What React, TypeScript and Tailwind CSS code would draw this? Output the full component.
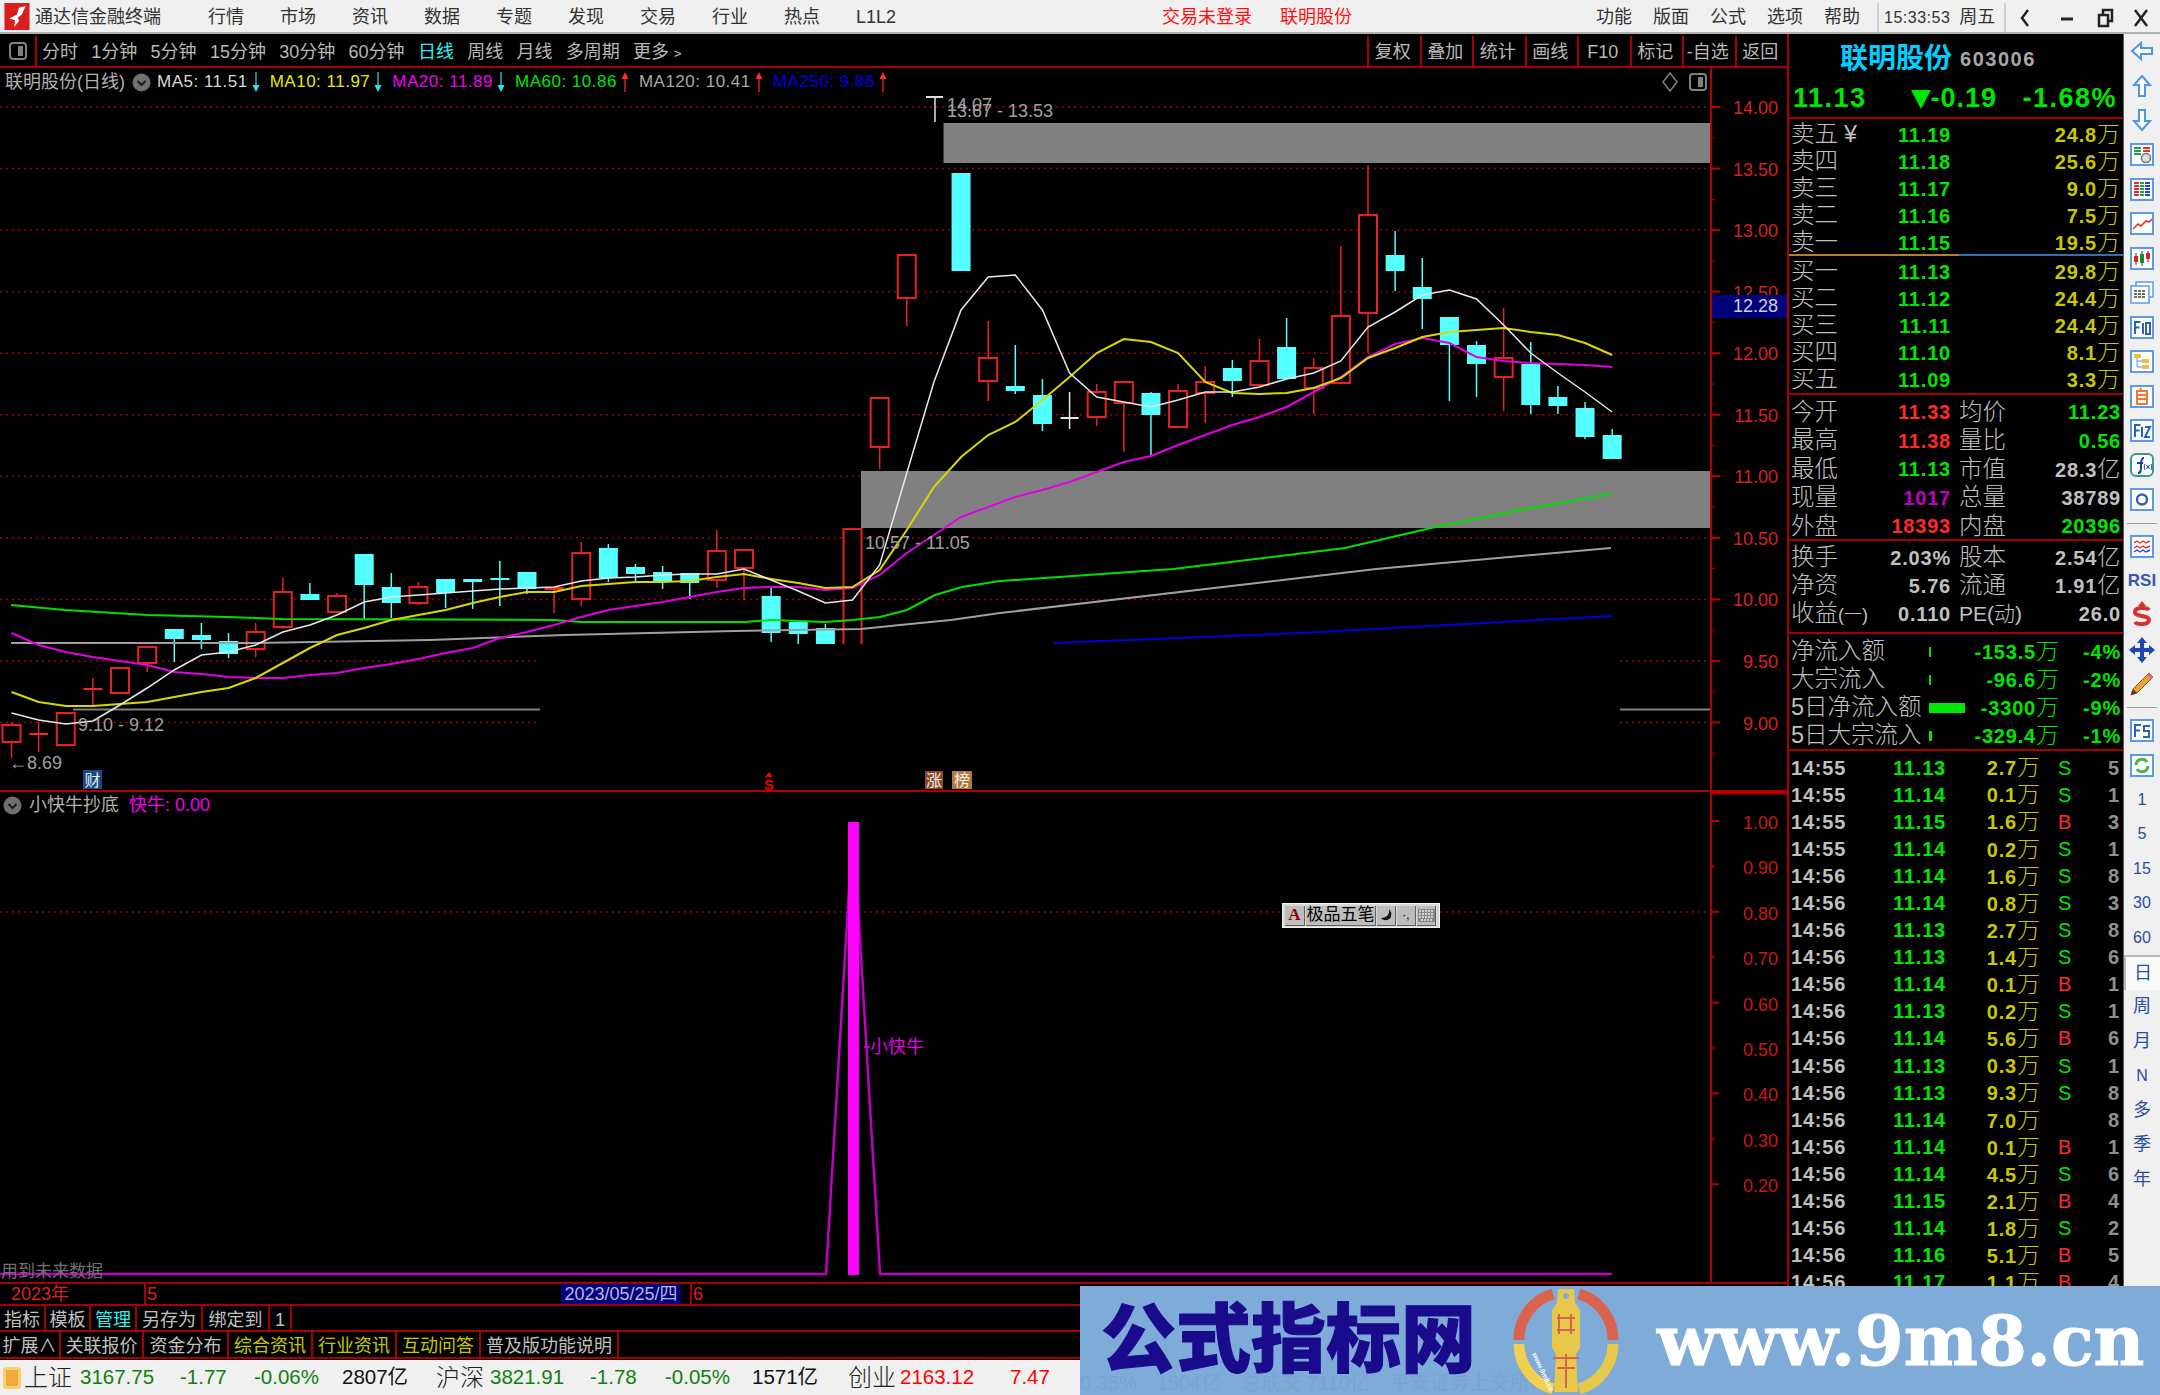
import React from "react";

const X = (i: number) => 11.5 + 27.13 * i;

// [index, bodyTop, bodyBottom, wickTop, wickBottom]
const red: number[][] = [
  [0, 725, 742, 722, 758], [1, 733, 735, 722, 752], [2, 713, 745, 712, 745], [3, 688, 690, 678, 705],
  [4, 668, 693, 668, 693], [5, 647, 663, 647, 672], [9, 632, 649, 623, 657], [10, 592, 627, 578, 629],
  [12, 596, 612, 593, 612], [15, 587, 603, 582, 605], [20, 587, 590, 587, 613], [21, 553, 599, 542, 606],
  [26, 551, 580, 530, 588], [27, 550, 568, 550, 600], [31, 529, 650, 529, 650], [32, 398, 447, 398, 469],
  [33, 255, 298, 255, 326], [36, 358, 381, 321, 401], [40, 392, 417, 384, 426], [41, 382, 403, 382, 452],
  [43, 391, 427, 384, 427], [44, 382, 393, 366, 423], [46, 361, 385, 339, 385], [48, 368, 388, 358, 414],
  [49, 316, 383, 246, 383], [50, 215, 313, 165, 353], [55, 358, 377, 308, 411],
];
const cyan: number[][] = [
  [6, 629, 639, 629, 662], [7, 635, 640, 623, 649], [8, 641, 654, 633, 658], [11, 594, 600, 583, 600],
  [13, 554, 585, 554, 620], [14, 587, 603, 573, 618], [16, 579, 593, 579, 608], [17, 579, 582, 579, 609],
  [18, 578, 580, 561, 606], [19, 572, 589, 572, 594], [22, 548, 578, 544, 582], [23, 567, 574, 564, 583],
  [24, 572, 581, 566, 589], [25, 573, 583, 573, 599], [28, 596, 633, 588, 642], [29, 622, 634, 622, 644],
  [30, 628, 644, 624, 644], [35, 173, 271, 173, 271], [37, 386, 391, 345, 394], [38, 395, 424, 379, 431],
  [42, 393, 415, 392, 455], [45, 368, 381, 360, 397], [47, 347, 379, 318, 379], [51, 255, 271, 231, 291],
  [52, 287, 299, 258, 329], [53, 317, 345, 317, 401], [54, 345, 364, 341, 397], [56, 364, 405, 342, 414],
  [57, 397, 406, 386, 414], [58, 408, 437, 402, 439], [59, 435, 459, 429, 459],
];

const ma5 = [713, 720, 724, 721, 705, 688, 670, 655, 652, 645, 632, 625, 615, 602, 597, 595, 593, 591, 589, 588, 587, 581, 578, 577, 575, 574, 574, 569, 580, 591, 603, 600, 565, 473, 382, 310, 277, 275, 310, 373, 397, 402, 407, 400, 392, 392, 387, 379, 373, 361, 327, 312, 295, 290, 299, 325, 353, 373, 392, 412];
const ma10 = [692, 702, 706, 706, 704, 702, 697, 692, 688, 678, 663, 648, 635, 628, 620, 615, 610, 603, 597, 592, 592, 586, 584, 582, 582, 581, 577, 574, 579, 583, 588, 587, 570, 530, 487, 457, 435, 422, 400, 377, 353, 339, 342, 353, 382, 393, 394, 393, 388, 378, 358, 348, 337, 332, 330, 328, 332, 335, 343, 355];
const ma20 = [633, 645, 652, 657, 661, 665, 672, 674, 677, 678, 678, 675, 673, 668, 664, 659, 653, 648, 638, 632, 625, 617, 610, 606, 602, 597, 592, 588, 587, 587, 590, 588, 575, 553, 535, 517, 507, 497, 490, 482, 472, 462, 456, 445, 435, 425, 417, 407, 392, 377, 357, 344, 338, 343, 357, 361, 363, 364, 365, 367];
const pts = (a: number[]) => a.map((y, i) => `${X(i)},${y}`).join(" ");

const green = "11,605 65,610 147,615 228,617 282,619 554,620 582,622 745,622 772,620 825,622 853,620 880,617 907,610 935,595 962,587 1000,581 1173,569 1345,548 1431,528 1520,510 1611,494";
const gray = "11,643 255,643 430,640 565,635 735,631 861,629 900,625 951,620 1000,613 1376,569 1611,548";

const upperTicks = ["14.00", "13.50", "13.00", "12.50", "12.00", "11.50", "11.00", "10.50", "10.00", "9.50", "9.00"];
const lowerTicks = ["1.00", "0.90", "0.80", "0.70", "0.60", "0.50", "0.40", "0.30", "0.20"];

function Chart() {
  return (
    <svg className="absolute inset-0 w-full h-full" viewBox="0 68 1787 1214">
      {/* grid */}
      {upperTicks.map((t, i) => {
        const y = 107 + 61.55 * i;
        const short = i >= 9;
        return (
          <g key={t}>
            {short ? (
              <>
                <line x1="0" x2="537" y1={y} y2={y} stroke="#a00000" strokeWidth="1.5" strokeDasharray="2 4" />
                <line x1="1620" x2="1711" y1={y} y2={y} stroke="#a00000" strokeWidth="1.5" strokeDasharray="2 4" />
              </>
            ) : (
              <line x1="0" x2="1711" y1={y} y2={y} stroke="#a00000" strokeWidth="1.5" strokeDasharray="2 4" />
            )}
            <line x1="1711" x2="1720" y1={y} y2={y} stroke="#c00000" strokeWidth="2" />
            <line x1="1711" x2="1715" y1={y + 30.8} y2={y + 30.8} stroke="#c00000" strokeWidth="1" />
            <text x="1778" y={y + 7} fontSize="18" textAnchor="end" fill="#d82020">{t}</text>
          </g>
        );
      })}

      {/* zones */}
      <rect x="943.5" y="123" width="767.5" height="40" fill="#808080" />
      <rect x="861" y="471" width="850" height="57" fill="#808080" />
      <line x1="73" x2="540" y1="709.5" y2="709.5" stroke="#808080" strokeWidth="2" />
      <line x1="1620" x2="1711" y1="709.5" y2="709.5" stroke="#808080" strokeWidth="2" />

      {/* candles */}
      {red.map(([i, t, b, wt, wb]) => (
        <g key={i}>
          <line x1={X(i)} x2={X(i)} y1={wt} y2={wb} stroke="#e82020" strokeWidth="1.5" />
          {b - t < 4 ? (
            <rect x={X(i) - 9.5} y={t} width="19" height={b - t} fill="#ff2020" />
          ) : (
            <rect x={X(i) - 9} y={t} width="18" height={b - t} fill="#000" stroke="#e82020" strokeWidth="2" />
          )}
        </g>
      ))}
      {cyan.map(([i, t, b, wt, wb]) => (
        <g key={i}>
          <line x1={X(i)} x2={X(i)} y1={wt} y2={wb} stroke="#54ffff" strokeWidth="1.5" />
          <rect x={X(i) - 9.5} y={t} width="19" height={b - t} fill="#54ffff" />
        </g>
      ))}
      <rect x="540" y="644" width="1080" height="125" fill="#000" />
      <line x1={X(39)} x2={X(39)} y1="392" y2="429" stroke="#e8e8e8" strokeWidth="1.5" />
      <line x1={X(39) - 9} x2={X(39) + 9} y1="418" y2="418" stroke="#e8e8e8" strokeWidth="2" />
      <line x1="935" x2="935" y1="97" y2="122" stroke="#e0e0e0" strokeWidth="1.5" />
      <line x1="926" x2="943" y1="97" y2="97" stroke="#e0e0e0" strokeWidth="2" />

      {/* moving averages */}
      <polyline points={green} fill="none" stroke="#00e000" strokeWidth="2" />
      <polyline points={gray} fill="none" stroke="#a0a0a0" strokeWidth="2" />
      <polyline points="1054,643 1300,633 1612,616" fill="none" stroke="#0000d8" strokeWidth="2" />
      <polyline points={pts(ma20)} fill="none" stroke="#e000e0" strokeWidth="2" />
      <polyline points={pts(ma10)} fill="none" stroke="#d8d800" strokeWidth="2" />
      <polyline points={pts(ma5)} fill="none" stroke="#e8e8e8" strokeWidth="1.5" />

      {/* labels */}
      <g fontSize="18" fill="#a0a0a0">
        <text x="947" y="111">14.07</text>
        <text x="947" y="117">13.67 - 13.53</text>
        <text x="865" y="549">10.57 - 11.05</text>
        <text x="78" y="731">9.10 - 9.12</text>
        <text x="9" y="769">←8.69</text>
      </g>

      {/* markers along the pane bottom */}
      <rect x="83" y="770" width="19" height="19" fill="#174a86" />
      <text x="92.5" y="786" fontSize="16" textAnchor="middle" fill="#e8e8e8">财</text>
      <path d="M769 772l-4 5h8z" fill="#f00000" />
      <text x="769" y="790" fontSize="15" fontWeight="700" textAnchor="middle" fill="#f00000">S</text>
      <rect x="925" y="771" width="18" height="18" fill="#8c4a24" />
      <text x="934" y="786" fontSize="16" textAnchor="middle" fill="#f0f0f0">涨</text>
      <rect x="952" y="771" width="20" height="18" fill="#b07a3a" />
      <text x="962" y="786" fontSize="16" textAnchor="middle" fill="#f0f0f0">榜</text>

      {/* price flag */}
      <rect x="1712" y="295" width="75" height="23" fill="#00007c" />
      <text x="1778" y="312" fontSize="18" textAnchor="end" fill="#d0d0d0">12.28</text>

      {/* pane divider and axes */}
      <line x1="0" x2="1787" y1="791" y2="791" stroke="#b00000" strokeWidth="2" />
      <line x1="1711" x2="1787" y1="793" y2="793" stroke="#b00000" strokeWidth="3" />
      <line x1="1711" x2="1711" y1="68" y2="1282" stroke="#b00000" strokeWidth="2" />

      {/* lower pane */}
      <line x1="0" x2="1711" y1="912" y2="912" stroke="#a00000" strokeWidth="1.5" strokeDasharray="2 4" />
      {lowerTicks.map((t, i) => {
        const y = 821 + 45.4 * i;
        return (
          <g key={t}>
            <line x1="1711" x2={i % 2 === 0 ? 1719 : 1714} y1={y} y2={y} stroke="#c00000" strokeWidth="2" />
            <text x="1778" y={y + 8} fontSize="18" textAnchor="end" fill="#c81818">{t}</text>
          </g>
        );
      })}
      <polyline points="0,1274 826,1274 853,822 880,1274 1612,1274" fill="none" stroke="#c000c0" strokeWidth="2.5" />
      <rect x="848" y="822" width="11" height="453" fill="#ff00ff" />
      <line x1="864" x2="870" y1="1047" y2="1047" stroke="#e000e0" strokeWidth="1.5" />
      <text x="870" y="1053" fontSize="18" fill="#e000e0">小快牛</text>
      <text x="1" y="1277" fontSize="17" fill="#707070">用到未来数据</text>
    </svg>
  );
}

function Arrow({ up }: { up?: boolean }) {
  return (
    <svg width="8" height="20" viewBox="0 0 8 20" className="mx-[4px]">
      {up ? (
        <path d="M4 0L7.5 7H4.6V20H3.4V7H.5z" fill="#ff2a2a" />
      ) : (
        <path d="M4 20L7.5 13H4.6V0H3.4V13H.5z" fill="#30e0f0" />
      )}
    </svg>
  );
}

const legend = [
  { t: "MA5: 11.51", c: "text-[#d8d8d8]" },
  { t: "MA10: 11.97", c: "text-[#e8e800]" },
  { t: "MA20: 11.89", c: "text-[#f000f0]" },
  { t: "MA60: 10.86", c: "text-[#00e800]", up: true },
  { t: "MA120: 10.41", c: "text-[#a8a8a8]", up: true },
  { t: "MA250: 9.86", c: "text-[#0000e0]", up: true },
];

function RoundChevron() {
  return (
    <svg width="19" height="19" viewBox="0 0 19 19">
      <circle cx="9.5" cy="9.5" r="9" fill="#707070" />
      <path d="M5.5 8l4 4 4-4" fill="none" stroke="#1a1a1a" strokeWidth="2" />
    </svg>
  );
}

function SplitIcon() {
  return (
    <svg width="18" height="18" viewBox="0 0 18 18">
      <rect x="1" y="1" width="16" height="16" rx="3" fill="none" stroke="#808080" strokeWidth="2" />
      <rect x="9" y="4" width="5" height="10" fill="#808080" />
    </svg>
  );
}

const periods = ["分时", "1分钟", "5分钟", "15分钟", "30分钟", "60分钟", "日线", "周线", "月线", "多周期", "更多﹥"];
const rightTabs = ["复权", "叠加", "统计", "画线", "F10", "标记", "-自选", "返回"];

function LeftColumn() {
  return (
    <div className="w-[1787px] flex flex-col shrink-0">
      <div className="h-[34px] pt-[2px] flex items-stretch border-b-2 border-[#a80000] text-[18px] text-[#b8b8b8]">
        <div className="w-[37px] border-r-2 border-[#a80000] flex items-center justify-center">
          <SplitIcon />
        </div>
        <div className="flex items-center gap-[13.3px] pl-[5px] pt-[2px] flex-1">
          {periods.map((p) => (
            <span key={p} className={p === "日线" ? "text-[#30f0f0]" : ""}>{p}</span>
          ))}
        </div>
        {rightTabs.map((t) => (
          <div key={t} className="w-[52.5px] border-l-2 border-[#a80000] flex items-center justify-center pt-[2px] pr-[3px]">{t}</div>
        ))}
      </div>

      <div className="relative h-[1214px] overflow-hidden">
        <Chart />
        <div className="absolute left-[5px] right-[80px] top-[2px] h-[24px] flex items-center text-[17px] tracking-[0.5px]">
          <span className="text-[#b0b0b0] text-[18px] tracking-normal mr-[7px]">联明股份(日线)</span>
          <RoundChevron />
          <span className="w-[6px]" />
          {legend.map((m) => (
            <React.Fragment key={m.t}>
              <span className={m.c}>{m.t}</span>
              <Arrow up={m.up} />
              <span className="w-[6px]" />
            </React.Fragment>
          ))}
          <span className="flex-1" />
          <svg width="18" height="22" viewBox="0 0 18 22" className="mr-[10px]">
            <path d="M9 2l7 9-7 9-7-9z" fill="none" stroke="#808080" strokeWidth="1.5" />
          </svg>
          <SplitIcon />
        </div>
        <div className="absolute left-[3px] top-[725px] h-[24px] flex items-center gap-[7px] text-[18px]">
          <RoundChevron />
          <span className="text-[#b0b0b0]">小快牛抄底</span>
          <span className="text-[#f000f0] ml-[3px]">快牛: 0.00</span>
        </div>
        <div className="absolute left-[1282px] top-[835px] w-[158px] h-[25px] bg-[#d8d8d0] border border-[#f4f4f0] flex items-center gap-[1px] px-[2px] text-[17px] text-black">
          <span className="w-[20px] h-[20px] bg-[#bdbdbd] text-[#900000] font-bold font-['Liberation_Serif',serif] flex items-center justify-center border-b border-r border-[#606060]">A</span>
          <span className="w-[70px] h-[20px] bg-[#bdbdbd] flex items-center justify-center border-b border-r border-[#606060]">极品五笔</span>
          <span className="w-[19px] h-[20px] bg-[#bdbdbd] flex items-center justify-center border-b border-r border-[#606060]">
            <svg width="14" height="14" viewBox="0 0 14 14"><path d="M10 1c1 5-2 9-8 9 2 3 8 3 10-1 1-3 0-6-2-8z" fill="#111" /></svg>
          </span>
          <span className="w-[19px] h-[20px] bg-[#bdbdbd] flex items-center justify-center border-b border-r border-[#606060] text-[12px]">·,</span>
          <span className="w-[19px] h-[20px] bg-[#bdbdbd] flex items-center justify-center border-b border-r border-[#606060]">
            <svg width="17" height="13" viewBox="0 0 17 13"><rect width="17" height="13" fill="#888" /><path d="M1 2h15M1 5h15M1 8h15M3 11h11" stroke="#e8e8e8" strokeWidth="1.4" strokeDasharray="2 1" /></svg>
          </span>
        </div>
      </div>

      {/* date axis */}
      <div className="h-[24px] border-y-2 border-[#a80000] flex text-[18px] text-[#d82020] relative items-stretch">
        <div className="w-[146px] border-r-2 border-[#a80000] pl-[11px] pt-[1px] flex items-center">2023年</div>
        <div className="w-[415px] pl-[1px] pt-[1px] flex items-center">5</div>
        <div className="w-[120px] bg-[#00007c] text-[#b8b8d8] text-[18px] flex items-center justify-center whitespace-nowrap">2023/05/25/四</div>
        <div className="w-[9px]" />
        <div className="border-l-2 border-[#a80000] pl-[1px] pt-[1px] flex items-center">6</div>
      </div>

      <div className="h-[26px] flex border-b-2 border-[#a80000] text-[18px] text-[#c0c0c0]">
        {[["指标", "w-[46px]"], ["模板", "w-[45px]"], ["管理", "w-[46px] text-[#30f0f0]"], ["另存为", "w-[66px]"], ["绑定到", "w-[67px]"], ["1", "w-[22px]"]].map(([t, w]) => (
          <div key={t} className={`${w} border-r-2 border-[#a80000] flex items-center justify-center pt-[4px]`}>{t}</div>
        ))}
      </div>
      <div className="h-[27px] flex border-b-2 border-[#a80000] text-[18px] text-[#c0c0c0]">
        {[["扩展∧", "w-[61px]"], ["关联报价", "w-[83px]"], ["资金分布", "w-[85px]"], ["综合资讯", "w-[84px] text-[#c8c800]"], ["行业资讯", "w-[84px] text-[#c8c800]"], ["互动问答", "w-[84px] text-[#c8c800]"], ["普及版功能说明", "w-[138px]"]].map(([t, w]) => (
          <div key={t} className={`${w} border-r-2 border-[#a80000] flex items-center justify-center whitespace-nowrap pt-[4px]`}>{t}</div>
        ))}
      </div>
    </div>
  );
}

const G = "text-[#00e600]";
const R = "text-[#ff2a2a]";
const W = "text-[#c0c0c0]";

const sells = [["卖五", "11.19", "24.8"], ["卖四", "11.18", "25.6"], ["卖三", "11.17", "9.0"], ["卖二", "11.16", "7.5"], ["卖一", "11.15", "19.5"]];
const buys = [["买一", "11.13", "29.8"], ["买二", "11.12", "24.4"], ["买三", "11.11", "24.4"], ["买四", "11.10", "8.1"], ["买五", "11.09", "3.3"]];

const info = [
  ["今开", "11.33", R, "均价", "11.23", G],
  ["最高", "11.38", R, "量比", "0.56", G],
  ["最低", "11.13", G, "市值", "28.3亿", W],
  ["现量", "1017", "text-[#c000c0]", "总量", "38789", W],
  ["外盘", "18393", R, "内盘", "20396", G],
];
const info2 = [
  ["换手", "2.03%", W, "股本", "2.54亿", W],
  ["净资", "5.76", W, "流通", "1.91亿", W],
  ["收益(一)", "0.110", W, "PE(动)", "26.0", W],
];
const flows = [
  ["净流入额", 2, "-153.5万", "-4%"],
  ["大宗流入", 2, "-96.6万", "-2%"],
  ["5日净流入额", 36, "-3300万", "-9%"],
  ["5日大宗流入", 3, "-329.4万", "-1%"],
];
const trades = [
  ["14:55", "11.13", "2.7", "S", "5"], ["14:55", "11.14", "0.1", "S", "1"], ["14:55", "11.15", "1.6", "B", "3"],
  ["14:55", "11.14", "0.2", "S", "1"], ["14:56", "11.14", "1.6", "S", "8"], ["14:56", "11.14", "0.8", "S", "3"],
  ["14:56", "11.13", "2.7", "S", "8"], ["14:56", "11.13", "1.4", "S", "6"], ["14:56", "11.14", "0.1", "B", "1"],
  ["14:56", "11.13", "0.2", "S", "1"], ["14:56", "11.14", "5.6", "B", "6"], ["14:56", "11.13", "0.3", "S", "1"],
  ["14:56", "11.13", "9.3", "S", "8"], ["14:56", "11.14", "7.0", "", "8"], ["14:56", "11.14", "0.1", "B", "1"],
  ["14:56", "11.14", "4.5", "S", "6"], ["14:56", "11.15", "2.1", "B", "4"], ["14:56", "11.14", "1.8", "S", "2"],
  ["14:56", "11.16", "5.1", "B", "5"], ["14:56", "11.17", "1.1", "B", "4"],
];

const numCls = "font-bold tracking-[0.8px] text-[20px]";
const cjkCls = "text-[23.5px] font-light";

function Wan() {
  return <span className="text-[23px] font-light">万</span>;
}

function OrderRow({ r, flag }: { r: string[]; flag?: boolean }) {
  return (
    <div className="h-[27px] pt-[4px] flex items-center pl-[2px] pr-[3px]">
      <span className={`${cjkCls} ${W} w-[107px] whitespace-nowrap`}>
        {r[0]}
        {flag && <span className="ml-[6px]">¥</span>}
      </span>
      <span className={`${numCls} ${G} w-[53px] text-right`}>{r[1]}</span>
      <span className="flex-1 text-right text-[#c8c800] whitespace-nowrap">
        <span className={numCls}>{r[2]}</span>
        <Wan />
      </span>
    </div>
  );
}

function InfoRow({ r, h }: { r: string[]; h: string }) {
  const paren = r[0].indexOf("(");
  return (
    <div className={`${h} pt-[4px] flex items-center pl-[2px] pr-[2px]`}>
      <span className={`${cjkCls} ${W} w-[90px] whitespace-nowrap`}>
        {paren > 0 ? (
          <>
            {r[0].slice(0, paren)}
            <span className="text-[18px]">{r[0].slice(paren)}</span>
          </>
        ) : (
          r[0]
        )}
      </span>
      <span className={`${numCls} ${r[2]} w-[70px] text-right whitespace-nowrap`}>{r[1]}</span>
      <span className={`${W} ml-[8px] w-[70px] whitespace-nowrap font-light ${r[3].startsWith("PE") ? "text-[21px]" : "text-[23.5px]"}`}>{r[3]}</span>
      <span className={`${numCls} ${r[5]} flex-1 text-right whitespace-nowrap`}>
        {r[4].endsWith("亿") ? r[4].slice(0, -1) : r[4]}
        {r[4].endsWith("亿") && <span className="text-[23px] font-light">亿</span>}
      </span>
    </div>
  );
}

function RightPanel() {
  return (
    <div className="w-[337px] shrink-0 border-l-2 border-r border-l-[#a80000] border-r-[#606060] bg-black h-[1326px] overflow-hidden">
      <div className="h-[46px] pt-[4px] flex items-center pl-[51px]">
        <span className="text-[28px] font-bold text-[#00cfff] leading-none">联明股份</span>
        <span className="ml-[8px] text-[20px] font-bold tracking-[1.5px] text-[#a8a8a8]">603006</span>
      </div>
      <div className="h-[39px] flex items-center text-[27px] font-bold text-[#00e600] border-b-2 border-[#a80000] pl-[4px] pr-[6px] tracking-[1.5px]">
        <span>11.13</span>
        <span className="ml-[44px] flex items-center tracking-[1px]">
          <svg width="20" height="20" viewBox="0 0 20 20"><path d="M0 1h20L10 20z" fill="#00e600" /></svg>
          -0.19
        </span>
        <span className="flex-1 text-right">-1.68%</span>
      </div>

      {sells.map((r, i) => <OrderRow key={r[0]} r={r} flag={i === 0} />)}
      <div className="h-[2px] flex">
        <div className="w-[170px] bg-[#b08030]" />
        <div className="flex-1 bg-[#3070b0]" />
      </div>
      {buys.map((r) => <OrderRow key={r[0]} r={r} />)}
      <div className="h-[4px] border-b-2 border-[#a80000]" />

      <div className="h-[1px]" />
      {info.map((r) => <InfoRow key={r[0]} r={r} h="h-[28.5px]" />)}
      <div className="h-[2px] bg-[#a80000]" />
      <div className="h-[1px]" />
      {info2.map((r) => <InfoRow key={r[0]} r={r} h="h-[28px]" />)}
      <div className="h-[8px] border-b-2 border-[#a80000]" />
      <div className="h-[2px]" />

      {flows.map((f) => (
        <div key={f[0] as string} className="h-[28px] pt-[4px] flex items-center pl-[2px] pr-[2px]">
          <span className={`${cjkCls} ${W} w-[138px] whitespace-nowrap`}>{f[0]}</span>
          <span className="w-[40px]">
            <span className="block h-[10px] bg-[#00e600]" style={{ width: f[1] as number }} />
          </span>
          <span className={`w-[90px] text-right whitespace-nowrap ${G}`}>
            <span className={numCls}>{(f[2] as string).slice(0, -1)}</span>
            <Wan />
          </span>
          <span className={`${numCls} ${G} flex-1 text-right`}>{f[3]}</span>
        </div>
      ))}
      <div className="h-[3px] border-b-2 border-[#a80000]" />
      <div className="h-[1.5px]" />

      {trades.map((t, i) => (
        <div key={i} className="h-[27.1px] pt-[4px] flex items-center pl-[2px] pr-[3px]">
          <span className={`${numCls} ${W} w-[100px]`}>{t[0]}</span>
          <span className={`${numCls} ${G} w-[55px] text-right`}>{t[1]}</span>
          <span className="w-[94px] text-right text-[#c8c800] whitespace-nowrap">
            <span className={numCls}>{t[2]}</span>
            <Wan />
          </span>
          <span className={`w-[30px] pl-[18px] text-[20px] ${t[3] === "S" ? G : R}`}>{t[3]}</span>
          <span className={`${numCls} text-[#909090] flex-1 text-right`}>{t[4]}</span>
        </div>
      ))}
    </div>
  );
}

function Box({ children }: { children: React.ReactNode }) {
  return (
    <svg width="24" height="23" viewBox="0 0 24 23">
      <rect x="1" y="1" width="22" height="21" fill="#fff" stroke="#5b9be8" strokeWidth="2" />
      {children}
    </svg>
  );
}

const arrowProps = { fill: "#fff", stroke: "#4f94e6", strokeWidth: 2 };

const iconsA: React.ReactNode[] = [
  <svg width="24" height="20" viewBox="0 0 24 20"><path d="M2 10L11 2v5h11v6H11v5z" {...arrowProps} /></svg>,
  <svg width="20" height="24" viewBox="0 0 20 24"><path d="M10 2l8 9h-5v11H7V11H2z" {...arrowProps} /></svg>,
  <svg width="20" height="24" viewBox="0 0 20 24"><path d="M10 22l8-9h-5V2H7v11H2z" {...arrowProps} /></svg>,
  <Box><path d="M4 5h7M4 8h7M4 11h7" stroke="#20a040" strokeWidth="2" /><path d="M13 5h7M13 8h7" stroke="#e03030" strokeWidth="2" /><circle cx="16" cy="15" r="4.5" fill="#ddd" stroke="#777" strokeWidth="1.5" /></Box>,
  <Box><path d="M4 5h5M4 8h5M4 11h5M4 14h5M4 17h5" stroke="#e03030" strokeWidth="2" /><path d="M10 5h4M10 8h4M10 11h4M10 14h4M10 17h4" stroke="#20a040" strokeWidth="2" /><path d="M15 5h5M15 8h5M15 11h5M15 14h5M15 17h5" stroke="#2040e0" strokeWidth="2" /></Box>,
  <Box><path d="M3 17l5-5 3 2 5-5 3 1 3-3" fill="none" stroke="#e03030" strokeWidth="1.6" /></Box>,
  <Box><path d="M6 6v12M12 4v15M18 4v11" stroke="#333" strokeWidth="1" /><rect x="4" y="9" width="4" height="6" fill="#e02020" /><rect x="10" y="7" width="4" height="9" fill="#109030" /><rect x="16" y="6" width="4" height="6" fill="#e02020" /></Box>,
  <svg width="24" height="23" viewBox="0 0 24 23"><rect x="6" y="1" width="17" height="15" fill="#fff" stroke="#5b9be8" strokeWidth="1.5" /><rect x="1" y="5" width="18" height="17" fill="#fff" stroke="#5b9be8" strokeWidth="1.5" /><path d="M4 10h12M4 13h12M4 16h12" stroke="#707070" strokeWidth="2" strokeDasharray="3 1" /></svg>,
  <Box><path d="M5 18V6h5.5M5 11.5h4.5M13 7v11M16 7h4v11h-4z" fill="none" stroke="#2a62b8" strokeWidth="2" /></Box>,
  <Box><rect x="4" y="4" width="7" height="4" fill="#f0c040" /><rect x="12" y="9" width="7" height="4" fill="#f0c040" /><rect x="12" y="15" width="7" height="4" fill="#f0c040" /><path d="M7 8v9h5M7 11h5" fill="none" stroke="#5b9be8" /></Box>,
  <Box><rect x="7" y="6" width="10" height="13" fill="none" stroke="#f07830" strokeWidth="2" /><path d="M7 10h10M7 14h10M11 3l-1 3" stroke="#f07830" strokeWidth="2" /></Box>,
  <Box><path d="M5 18V6h5.5M5 11.5h4.5M12 8v10M15 8h5l-5 10h5" fill="none" stroke="#2a62b8" strokeWidth="2" /></Box>,
  <svg width="24" height="24" viewBox="0 0 24 24"><rect x="1" y="1" width="22" height="22" rx="5" fill="#fff" stroke="#2f9e8f" strokeWidth="2" /><path d="M8 20c3 0 3-3 3-8s1-7 3-7M7 10h6" fill="none" stroke="#1a3fa0" strokeWidth="2" /><path d="M15 11c-1 2-1 4 0 6M21 11c1 2 1 4 0 6M16.5 12l3 4M19.5 12l-3 4" fill="none" stroke="#1a3fa0" /></svg>,
  <Box><circle cx="12" cy="11.5" r="5" fill="none" stroke="#2a62b8" strokeWidth="2.4" /></Box>,
];

const iconsB: React.ReactNode[] = [
  <Box><path d="M4 8l3-2 3 2 3-2 3 2 4-2M4 13l3-2 3 2 3-2 3 2 4-2" fill="none" stroke="#e03030" strokeWidth="1.4" /><path d="M4 17l3-2 3 2 3-2 3 2 4-2" fill="none" stroke="#2040e0" strokeWidth="1.4" /></Box>,
  <span className="text-[17px] font-bold text-[#3a55b8] leading-none">RSI</span>,
  <svg width="24" height="28" viewBox="0 0 24 28"><path d="M19 9c-2-3-14-3-14 2s14 3 14 8-12 5-14 2" fill="none" stroke="#d83030" strokeWidth="4" /><path d="M12 0l4 5H8z" fill="#d83030" /></svg>,
  <svg width="28" height="26" viewBox="0 0 28 26" fill="#1a4ab0"><path d="M14 0l5 6h-3v5h5V8l6 5-6 5v-3h-5v5h3l-5 6-5-6h3v-5H7v3l-6-5 6-5v3h5V6H9z" /></svg>,
  <svg width="26" height="26" viewBox="0 0 26 26"><path d="M20 2l4 4L8 22l-6 2 2-6z" fill="#f0a030" stroke="#805020" strokeWidth="1" /><path d="M2 24l2-6 4 4z" fill="#444" /><path d="M20 2l4 4-2 2-4-4z" fill="#e07070" /></svg>,
];

const iconsC: React.ReactNode[] = [
  <Box><path d="M5 18V6h6M5 11.5h5M20 7h-6v5h5v6h-6" fill="none" stroke="#2a62b8" strokeWidth="2" /></Box>,
  <Box><path d="M6 11a6 6 0 0 1 11-3M18 12a6 6 0 0 1-11 3" fill="none" stroke="#50b050" strokeWidth="3" /></Box>,
];

function SideBar() {
  const slot = "h-[34.5px] flex items-center justify-center";
  const text = ["1", "5", "15", "30", "60", "日", "周", "月", "N", "多", "季", "年"];
  return (
    <div className="flex-1 bg-[#f0f0f0] flex flex-col items-stretch text-[#2a4ea0]">
      {iconsA.map((ic, i) => <div key={i} className={slot}>{ic}</div>)}
      <div className="h-[12px] flex items-center px-[3px]"><div className="h-[1px] w-full bg-[#a0a0a0]" /></div>
      {iconsB.map((ic, i) => <div key={i} className={slot}>{ic}</div>)}
      <div className="h-[12px] flex items-center px-[3px]"><div className="h-[1px] w-full bg-[#a0a0a0]" /></div>
      {iconsC.map((ic, i) => <div key={i} className={slot}>{ic}</div>)}
      {text.map((t) => (
        <div key={t} className={`${slot} ${t === "日" ? "bg-[#fafafa] border-t-2 border-l-2 border-[#b8b8b8]" : ""} ${/[0-9N]/.test(t) ? "text-[16px]" : "text-[18px]"}`}>{t}</div>
      ))}
    </div>
  );
}

const statusItems = [
  ["上证", "w-[56px] text-[24px] font-light text-[#222]"],
  ["3167.75", "w-[100px] text-[#108010]"],
  ["-1.77", "w-[74px] text-[#108010]"],
  ["-0.06%", "w-[88px] text-[#108010]"],
  ["2807亿", "w-[94px] text-[#111]"],
  ["沪深", "w-[54px] text-[24px] font-light text-[#222]"],
  ["3821.91", "w-[100px] text-[#108010]"],
  ["-1.78", "w-[75px] text-[#108010]"],
  ["-0.05%", "w-[87px] text-[#108010]"],
  ["1571亿", "w-[96px] text-[#111]"],
  ["创业", "w-[52px] text-[24px] font-light text-[#222]"],
  ["2163.12", "w-[110px] text-[#ff0000]"],
  ["7.47", "w-[60px] text-[#ff0000]"],
];

function Banner() {
  return (
    <div className="absolute left-[1080px] top-[1286px] w-[1080px] h-[109px] bg-[#7fabd9] flex items-center overflow-hidden">
      <span className="absolute left-0 top-[82px] text-[20px] text-[#78a4d3] whitespace-nowrap">0.35%　1504亿　总成交 7110亿　平安证券上交所行情</span>
      <span className="relative ml-[21px] text-[75px] font-black leading-none text-[#1a0a8c] [-webkit-text-stroke:1px_#1a0a8c] whitespace-nowrap w-[400px]">公式指标网</span>
      <svg width="110" height="106" viewBox="0 0 110 106" className="relative ml-[10px] shrink-0">
        <path d="M8 52A47 47 0 0 1 42 6" fill="none" stroke="#d9634f" strokeWidth="11" />
        <path d="M102 52A47 47 0 0 0 68 6" fill="none" stroke="#d9634f" strokeWidth="11" />
        <path d="M8 56a47 47 0 0 0 34 45" fill="none" stroke="#f0d050" strokeWidth="11" />
        <path d="M102 56a47 47 0 0 1-34 45" fill="none" stroke="#e8c84a" strokeWidth="11" />
        <path d="M47 1h16l1 14 5 7v38l-4 6 2 38H43l2-38-4-6V22l5-7z" fill="#e8c84a" />
        <circle cx="55" cy="8" r="3" fill="#7fabd9" />
        <path d="M46 30h18M46 42h18M48 26v20M60 26v20M42 70h26M46 80h18M55 66v34" stroke="#d9634f" strokeWidth="2" fill="none" />
        <text x="21" y="66" fontSize="7" fontWeight="700" fill="#fff" transform="rotate(65 21 66)">www.9m8.cn</text>
      </svg>
      <span className="relative ml-[36px] text-[70px] font-bold leading-none text-white [-webkit-text-stroke:1px_white] font-['DejaVu_Serif',serif] whitespace-nowrap">www.9m8.cn</span>
    </div>
  );
}

export default function App() {
  return (
    <div className="relative w-[2160px] h-[1395px] overflow-hidden bg-black font-['Liberation_Sans','Noto_Sans_CJK_SC',sans-serif]">
      {/* title bar */}
      <div className="h-[34px] pt-[3px] bg-[#f0f0f0] border-b-2 border-[#b0b0b0] flex items-center text-[18px] text-[#333]">
        <svg width="26" height="27" viewBox="0 0 26 28" className="ml-[4px] -mt-[3px]">
          <rect width="26" height="28" fill="#d81e1e" />
          <path d="M5 16l8-4 2-7 7-2-4 9-4 3 1 4-5 6 1-7z" fill="#fff" />
        </svg>
        <span className="ml-[5px] w-[173px]">通达信金融终端</span>
        {["行情", "市场", "资讯", "数据", "专题", "发现", "交易", "行业", "热点", "L1L2"].map((m) => (
          <span key={m} className="w-[72px]">{m}</span>
        ))}
        <span className="ml-[234px] text-[#ff1010] w-[118px]">交易未登录</span>
        <span className="text-[#ff1010] w-[316px]">联明股份</span>
        {["功能", "版面", "公式", "选项"].map((m) => (
          <span key={m} className="w-[57px]">{m}</span>
        ))}
        <span className="w-[53px]">帮助</span>
        <div className="self-stretch border-l-2 border-[#d0d0d0] flex items-center pl-[5px] w-[127px]">
          <span className="text-[16px] tracking-[0.5px]">15:33:53</span>
          <span className="ml-[9px]">周五</span>
        </div>
        <div className="self-stretch border-l-2 border-[#d0d0d0] flex items-center flex-1 text-[#222]">
          <svg width="154" height="24" viewBox="0 0 154 24">
            <path d="M22 4l-6 8 6 8" fill="none" stroke="#222" strokeWidth="2.5" />
            <path d="M55 13h12" stroke="#222" strokeWidth="3" />
            <path d="M93 9h9v11h-9zM97 9V4h9v11h-4" fill="none" stroke="#222" strokeWidth="2.5" />
            <path d="M129 4l12 16M141 4l-12 16" stroke="#222" strokeWidth="2.5" />
          </svg>
        </div>
      </div>

      <div className="flex h-[1326px]">
        <LeftColumn />
        <RightPanel />
        <SideBar />
      </div>

      {/* index ticker */}
      <div className="h-[35px] bg-[#f0f0f0] flex items-center text-[20.5px] whitespace-nowrap">
        <div className="ml-[3px] mr-[3px] w-[18px] h-[22px] rounded-[3px] bg-[#f2a93b] border-[3px] border-[#f8d070]" />
        {statusItems.map(([t, c], i) => (
          <span key={i} className={c}>{t}</span>
        ))}
      </div>

      <Banner />
    </div>
  );
}
